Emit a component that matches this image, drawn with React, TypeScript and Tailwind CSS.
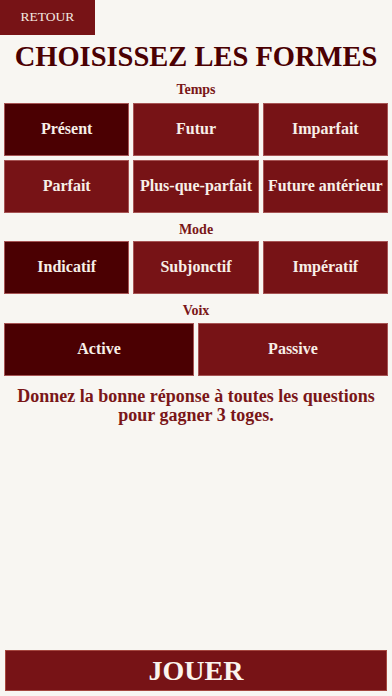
import { useState } from "react";

const serif = { fontFamily: '"Liberation Serif", "DejaVu Serif", serif' };

const TEMPS = ["Présent", "Futur", "Imparfait", "Parfait", "Plus-que-parfait", "Future antérieur"];
const MODES = ["Indicatif", "Subjonctif", "Impératif"];
const VOIX = ["Active", "Passive"];

function Option({
  label,
  active,
  onClick,
}: {
  label: string;
  active: boolean;
  onClick: () => void;
}) {
  return (
    <button
      onClick={onClick}
      className={`h-[53px] flex items-center justify-center border border-[#a65454] text-[16px] font-bold text-[#f7efe8] whitespace-nowrap ${
        active ? "bg-[#4b0002]" : "bg-[#771316]"
      }`}
    >
      {label}
    </button>
  );
}

function Label({ children }: { children: string }) {
  return <p className="text-center text-[14px] font-bold text-[#7a1618] leading-[13px]">{children}</p>;
}

export default function App() {
  const [temps, setTemps] = useState("Présent");
  const [mode, setMode] = useState("Indicatif");
  const [voix, setVoix] = useState("Active");

  return (
    <div style={serif} className="min-h-[696px] w-[392px] bg-[#f8f6f2] flex flex-col">
      <div>
        <button className="w-[95px] h-[35px] bg-[#771316] text-[#f3e8e0] text-[13.5px] flex items-center justify-center">
          RETOUR
        </button>
      </div>

      <h1 className="text-center text-[28.5px] font-bold text-[#4b0002] leading-none mt-[8px]">
        CHOISISSEZ LES FORMES
      </h1>

      {/* Temps */}
      <div className="mt-[11px]">
        <Label>Temps</Label>
      </div>
      <div className="grid grid-cols-3 gap-[4px] px-[4px] mt-[7px]">
        {TEMPS.map((t) => (
          <Option key={t} label={t} active={temps === t} onClick={() => setTemps(t)} />
        ))}
      </div>

      {/* Mode */}
      <div className="mt-[10px]">
        <Label>Mode</Label>
      </div>
      <div className="grid grid-cols-3 gap-[4px] px-[4px] mt-[5px]">
        {MODES.map((m) => (
          <Option key={m} label={m} active={mode === m} onClick={() => setMode(m)} />
        ))}
      </div>

      {/* Voix */}
      <div className="mt-[10px]">
        <Label>Voix</Label>
      </div>
      <div className="grid grid-cols-2 gap-[4px] px-[4px] mt-[6px]">
        {VOIX.map((v) => (
          <Option key={v} label={v} active={voix === v} onClick={() => setVoix(v)} />
        ))}
      </div>

      <p className="text-center text-[18px] font-bold text-[#7a1618] leading-[19px] mt-[11px] px-1">
        Donnez la bonne réponse à toutes les questions
        <br />
        pour gagner 3 toges.
      </p>

      <div className="mt-auto px-[5px] pb-[5px]">
        <button className="w-full h-[41px] bg-[#771316] border border-[#a5473f] text-[#fbf4ee] text-[28px] font-bold flex items-center justify-center leading-none">
          JOUER
        </button>
      </div>
    </div>
  );
}
